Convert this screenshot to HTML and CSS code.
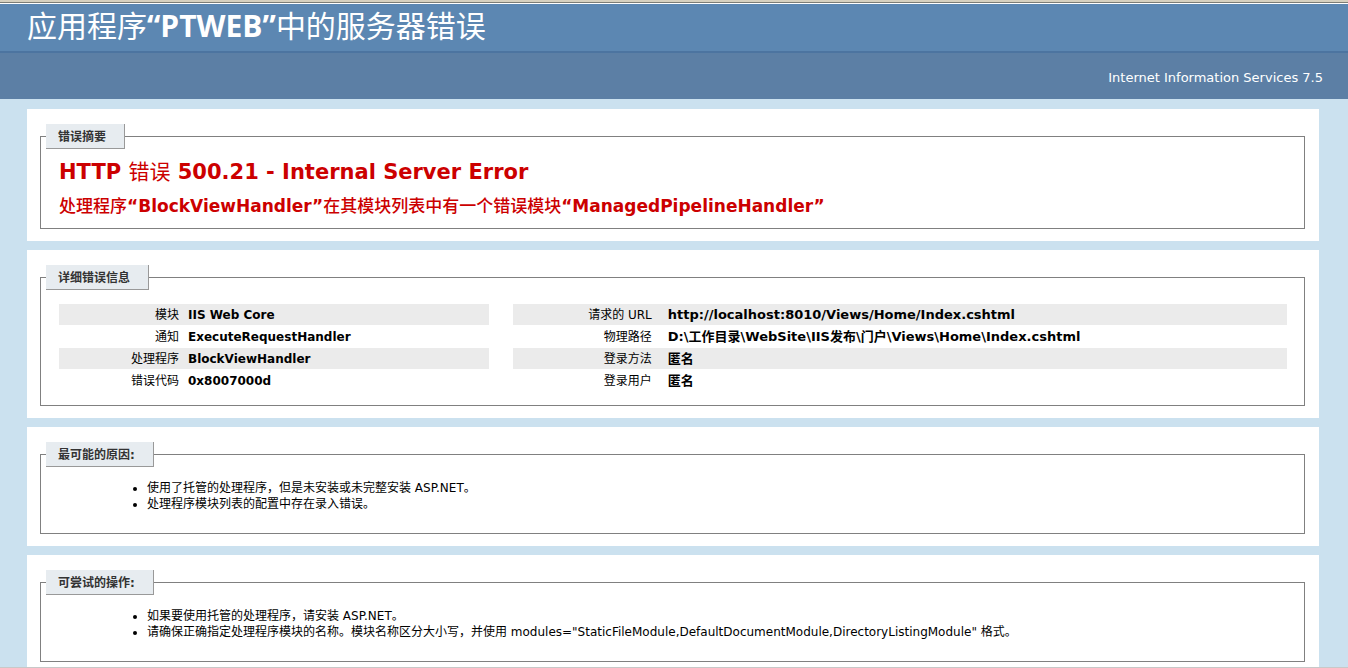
FILE: index.html
```
<!DOCTYPE html>
<html lang="zh-CN">
<head>
    <meta charset="utf-8">
    <title>IIS 7.5 详细错误 - 500.21 - Internal Server Error</title>
    <link rel="stylesheet" href="styles.css">
</head>
<body>
    <div class="page">
        <div class="header">
            <h1>应用程序<span class="latin">“PTWEB”</span>中的服务器错误</h1>
        </div>
        <div class="server-version">Internet Information Services 7.5</div>

        <div class="content">
            <div class="content-container">
                <fieldset class="summary">
                    <legend>错误摘要</legend>
                    <h2>HTTP <span class="thin">错误</span> 500.21 - Internal Server Error</h2>
                    <h3><span class="medium">处理程序</span>“BlockViewHandler”<span class="medium">在其模块列表中有一个错误模块</span>“ManagedPipelineHandler”</h3>
                </fieldset>
            </div>

            <div class="content-container">
                <fieldset class="details">
                    <legend>详细错误信息</legend>
                    <div class="details-grid">
                        <table class="details-left">
                            <tr class="alt"><th scope="row">模块</th><td>IIS Web Core</td></tr>
                            <tr><th scope="row">通知</th><td>ExecuteRequestHandler</td></tr>
                            <tr class="alt"><th scope="row">处理程序</th><td>BlockViewHandler</td></tr>
                            <tr><th scope="row">错误代码</th><td>0x8007000d</td></tr>
                        </table>
                        <table class="details-right">
                            <tr class="alt"><th scope="row">请求的 URL</th><td>http://localhost:8010/Views/Home/Index.cshtml</td></tr>
                            <tr><th scope="row">物理路径</th><td>D:\工作目录\WebSite\IIS发布\门户\Views\Home\Index.cshtml</td></tr>
                            <tr class="alt"><th scope="row">登录方法</th><td>匿名</td></tr>
                            <tr><th scope="row">登录用户</th><td>匿名</td></tr>
                        </table>
                    </div>
                </fieldset>
            </div>

            <div class="content-container">
                <fieldset>
                    <legend>最可能的原因:</legend>
                    <ul>
                        <li>使用了托管的处理程序，但是未安装或未完整安装 ASP.NET。</li>
                        <li>处理程序模块列表的配置中存在录入错误。</li>
                    </ul>
                </fieldset>
            </div>

            <div class="content-container">
                <fieldset>
                    <legend>可尝试的操作:</legend>
                    <ul>
                        <li>如果要使用托管的处理程序，请安装 ASP.NET。</li>
                        <li>请确保正确指定处理程序模块的名称。模块名称区分大小写，并使用 modules="StaticFileModule,DefaultDocumentModule,DirectoryListingModule" 格式。</li>
                    </ul>
                </fieldset>
            </div>
        </div>
    </div>
</body>
</html>
```

FILE: styles.css
```
* {
    box-sizing: border-box;
}
body {
    margin: 0;
    font-family: Verdana, "DejaVu Sans", "Noto Sans CJK SC", sans-serif;
    font-size: 12px;
    line-height: 16px;
    color: #000;
    background-color: #cbe1ef;
}
/* window edge above and below the page */
.page {
    height: 100vh;
    overflow: hidden;
    border-top: 2px solid #d6d0bf;
    border-bottom: 1px solid #c8c8c8;
}
.header {
    height: 51px;
    padding: 0 27px;
    border-top: 1px solid #7d7d75;
    border-bottom: 2px solid #4c74a0;
    box-shadow: inset 0 1px 0 #fff;
    background-color: #5c87b2;
    color: #fff;
}
h1 {
    margin: 0;
    font-family: "Trebuchet MS", "Open Sans", "Noto Sans CJK SC", sans-serif;
    font-size: 30px;
    line-height: 46px;
    font-weight: normal;
}
h1 .latin {
    font-weight: bold;
}
.server-version {
    padding: 17px 25px 13px;
    background-color: #5c7fa5;
    color: #fff;
    font-size: 13px;
    text-align: right;
}
.content {
    display: flex;
    flex-direction: column;
    gap: 9px;
    padding: 10px 29px 0 27px;
}
.content-container {
    padding: 15px 14px 12px 13px;
    background-color: #fff;
}
fieldset {
    margin: 0;
    padding: 13px 17px 21px 18px;
    border: 1px solid #808080;
}
legend {
    margin-left: -13px;
    padding: 5px 18px 3px 12px;
    border-right: 1px solid #999;
    border-bottom: 1px solid #999;
    background-color: #e7ecf0;
    color: #333;
    font-weight: bold;
}
.summary {
    padding: 9px 17px 10px 18px;
}
h2,
h3 {
    margin: 0;
    color: #c00;
}
h2 {
    font-size: 21px;
    line-height: 28px;
}
h3 {
    margin-top: 8px;
    font-size: 17px;
    line-height: 24px;
}
.thin {
    font-weight: normal;
}
.medium {
    font-weight: 500;
}
.details {
    padding: 13px 17px 13px 18px;
}
.details-grid {
    display: grid;
    grid-template-columns: 5fr 9fr;
    gap: 24px;
}
table {
    width: 100%;
    table-layout: fixed;
    border-spacing: 0 1px;
}
th,
td {
    height: 21px;
    padding: 0;
    text-align: left;
}
th {
    width: 30%;
    padding-right: 9px;
    font-weight: normal;
    text-align: right;
}
td {
    font-weight: bold;
    white-space: nowrap;
}
.details-right th {
    width: 20%;
    padding-right: 16px;
}
.details-right td {
    font-size: 13px;
}
.alt {
    background-color: #ebebeb;
}
ul {
    margin: 0;
    padding-left: 88px;
}
```
